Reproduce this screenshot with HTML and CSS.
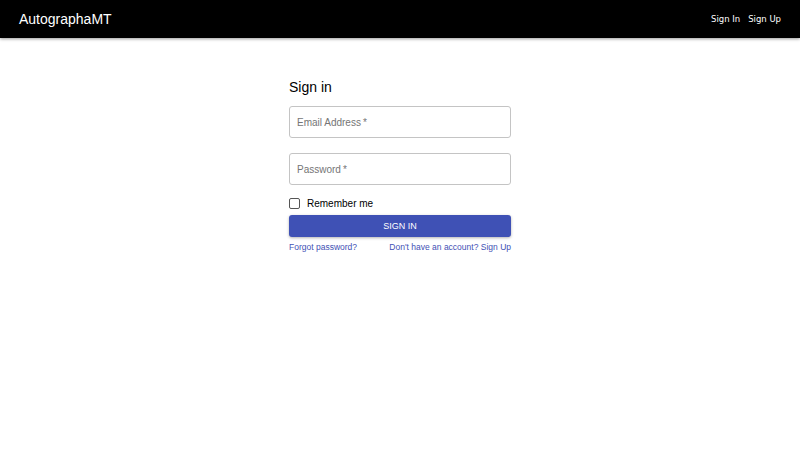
FILE: index.html
```html
<!DOCTYPE html>
<html lang="en">
<head>
	<meta charset="UTF-8">
	<title>AutographaMT</title>
	<link rel="stylesheet" href="styles.css">
</head>
<body>
	<header class="topbar">
		<div class="brand">AutographaMT</div>
		<nav class="topnav">
			<a href="#">Sign In</a>
			<a href="#">Sign Up</a>
		</nav>
	</header>
	<main class="page">
		<form class="signin">
			<h1 class="title">Sign in</h1>
			<div class="field">Email Address&thinsp;*</div>
			<div class="field">Password&thinsp;*</div>
			<label class="remember"><span class="box"></span>Remember me</label>
			<button type="button" class="btn">SIGN IN</button>
			<div class="links">
				<a href="#">Forgot password?</a>
				<a href="#">Don't have an account? Sign Up</a>
			</div>
		</form>
	</main>
</body>
</html>
```
FILE: styles.css
```css
*{
	padding: 0;
	margin: 0;
	box-sizing: border-box;
}
body{
	font-family: "Liberation Sans", Arial, sans-serif;
	background: #fff;
	color: #000;
}
a{
	text-decoration: none;
}
.topbar{
	height: 38px;
	background: #000;
	color: #fff;
	display: flex;
	align-items: center;
	justify-content: space-between;
	padding: 0 19px;
	box-shadow: 0 1px 3px rgba(0,0,0,.4);
}
.brand{
	font-size: 14px;
}
.topnav{
	display: flex;
	gap: 8px;
	font-family: "DejaVu Sans", sans-serif;
	font-size: 8.5px;
}
.topnav a{
	color: #fff;
}
.page{
	display: flex;
	justify-content: center;
	padding-top: 41px;
}
.signin{
	width: 222px;
	display: flex;
	flex-direction: column;
}
.title{
	font-size: 14px;
	font-weight: normal;
	line-height: 16px;
	margin-bottom: 11px;
}
.field{
	height: 32px;
	border: 1px solid #c4c4c4;
	border-radius: 3px;
	padding-left: 7px;
	display: flex;
	align-items: center;
	font-size: 10px;
	color: #757575;
	margin-bottom: 15px;
}
.remember{
	display: flex;
	align-items: center;
	font-size: 10px;
	margin-top: -4px;
	height: 14px;
}
.box{
	width: 11px;
	height: 11px;
	border: 1.5px solid #555;
	border-radius: 2px;
	margin-right: 7px;
}
.btn{
	margin-top: 5px;
	height: 22px;
	border: none;
	border-radius: 3px;
	background: #3f51b5;
	color: #fff;
	font-family: "Liberation Sans", Arial, sans-serif;
	font-size: 9px;
	box-shadow: 0 1px 3px rgba(0,0,0,.3);
}
.links{
	display: flex;
	justify-content: space-between;
	margin-top: 5px;
	font-size: 8.5px;
}
.links a{
	color: #3f51b5;
}
```
